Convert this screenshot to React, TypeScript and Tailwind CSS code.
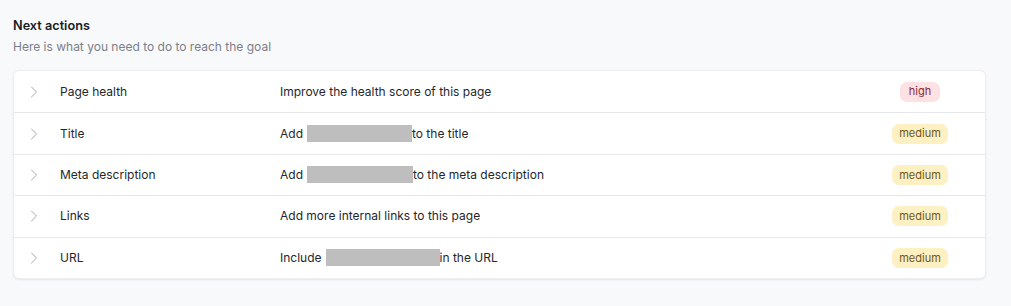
import { ChevronRight } from "lucide-react";

type Row = {
  label: string;
  before: string;
  blank?: number;
  after?: string;
  priority: "high" | "medium";
};

const rows: Row[] = [
  { label: "Page health", before: "Improve the health score of this page", priority: "high" },
  { label: "Title", before: "Add", blank: 105, after: "to the title", priority: "medium" },
  { label: "Meta description", before: "Add", blank: 106, after: "to the meta description", priority: "medium" },
  { label: "Links", before: "Add more internal links to this page", priority: "medium" },
  { label: "URL", before: "Include", blank: 114, after: "in the URL", priority: "medium" },
];

function Badge({ priority }: { priority: Row["priority"] }) {
  if (priority === "high") {
    return (
      <span className="inline-flex h-[20px] items-center rounded-[7px] bg-[#fde1e3] px-[9px] text-[11px] text-[#8e2a3b]">
        high
      </span>
    );
  }
  return (
    <span className="inline-flex h-[20px] items-center rounded-[7px] bg-[#fdf0c2] px-[7px] text-[11px] text-[#6f5620]">
      medium
    </span>
  );
}

export default function App() {
  return (
    <div className="min-h-[306px] w-[1011px] bg-[#f8f9fb] px-[13px] pt-[17px] font-['Inter',sans-serif] text-[12px] text-[#1f2329]">
      <div className="w-[973px]">
        <h2 className="text-[12.7px] font-semibold leading-[18px] text-[#1a1d21]">Next actions</h2>
        <p className="mt-[3px] text-[12px] leading-[18px] text-[#7b8088]">Here is what you need to do to reach the goal</p>

        <div className="mt-[14px] overflow-hidden rounded-[6px] border border-[#eceef1] bg-white shadow-[0_1px_2px_rgba(0,0,0,0.08)]">
          {rows.map((r, i) => (
            <div
              key={r.label}
              className={`flex h-[41.4px] items-center ${i > 0 ? "border-t border-[#e6e8eb]" : ""}`}
            >
              <div className="flex w-[46px] pl-[10px]">
                <ChevronRight size={20} strokeWidth={1.1} className="text-[#9a9fa6]" />
              </div>
              <div className="w-[220px] text-[#23272d]">{r.label}</div>
              <div className="flex flex-1 items-center text-[#23272d]">
                <span>{r.before}</span>
                {r.blank !== undefined && (
                  <>
                    <span className="ml-[4px] inline-block h-[17px] bg-[#bebebe]" style={{ width: r.blank }} />
                    <span>{r.after}</span>
                  </>
                )}
              </div>
              <div className="flex w-[130px] justify-center">
                <Badge priority={r.priority} />
              </div>
            </div>
          ))}
        </div>
      </div>
    </div>
  );
}
